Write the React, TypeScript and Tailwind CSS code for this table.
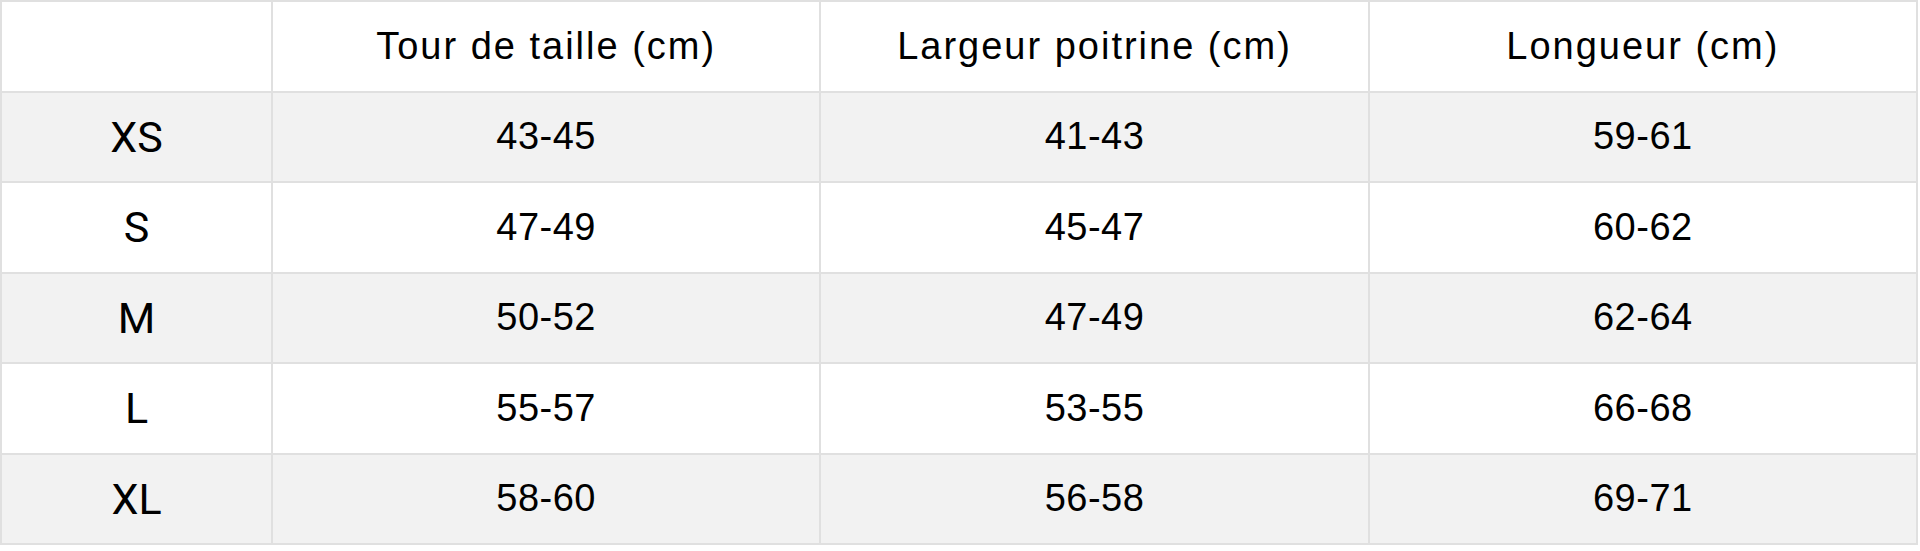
const headers = ["Tour de taille (cm)", "Largeur poitrine (cm)", "Longueur (cm)"];

const rows = [
  { size: "XS", values: ["43-45", "41-43", "59-61"] },
  { size: "S", values: ["47-49", "45-47", "60-62"] },
  { size: "M", values: ["50-52", "47-49", "62-64"] },
  { size: "L", values: ["55-57", "53-55", "66-68"] },
  { size: "XL", values: ["58-60", "56-58", "69-71"] },
];

export default function App() {
  return (
    <div className="bg-white w-[1920px] h-[551px]">
      <table className="w-[1918px] border-collapse border-2 border-[#e0e0e0] text-black font-['Liberation_Sans',sans-serif] table-fixed">
        <colgroup>
          <col className="w-[271px]" />
          <col />
          <col />
          <col />
        </colgroup>
        <thead>
          <tr className="h-[90.5px] bg-white">
            <th className="border-2 border-[#e0e0e0]" />
            {headers.map((h) => (
              <th
                key={h}
                className="border-2 border-[#e0e0e0] text-[38px] font-normal tracking-[2px] text-center"
              >
                {h}
              </th>
            ))}
          </tr>
        </thead>
        <tbody>
          {rows.map((r, i) => (
            <tr key={r.size} className={i % 2 === 0 ? "h-[90.5px] bg-[#f2f2f2]" : "h-[90.5px] bg-white"}>
              <td className="border-2 border-[#e0e0e0] text-center text-[43px] font-['Roboto',sans-serif]">
                {r.size}
              </td>
              {r.values.map((v, j) => (
                <td key={j} className="border-2 border-[#e0e0e0] text-center text-[38px] tracking-[0.5px]">
                  {v}
                </td>
              ))}
            </tr>
          ))}
        </tbody>
      </table>
    </div>
  );
}
